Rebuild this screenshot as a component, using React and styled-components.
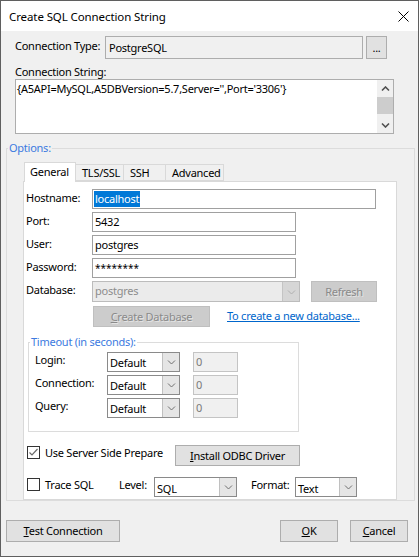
import React from 'react';
import styled, { createGlobalStyle } from 'styled-components';

const GlobalStyle = createGlobalStyle`
  html, body { margin: 0; padding: 0; background: #f0f0f0; }
  body {
    font-family: 'Noto Sans', 'Segoe UI', sans-serif;
    font-size: 11px;
    letter-spacing: -0.25px;
    color: #000;
  }
  * { box-sizing: border-box; }
`;

const Window = styled.div`
  width: 419px;
  height: 557px;
  border: 1px solid #5f5f5f;
  background: #f0f0f0;
  display: flex;
  flex-direction: column;
`;

const TitleBar = styled.div`
  height: 30px;
  flex: none;
  background: #fff;
  display: flex;
  align-items: center;
  justify-content: space-between;
  padding: 0 9px 0 8px;
  font-size: 11.5px;
  letter-spacing: -0.1px;
`;

const TopSection = styled.div`
  padding: 5px 0 0 14px;
`;

const TypeRow = styled.div`
  display: flex;
  height: 23px;
`;

const TopLabel = styled.div`
  width: 90px;
  padding-top: 2px;
  line-height: 15px;
`;

const ReadOnlyBox = styled.div`
  width: 258px;
  height: 23px;
  border: 1px solid #adadad;
  background: #f0f0f0;
  padding: 0 3px;
  line-height: 21px;
`;

const Button = styled.div`
  width: ${p => p.$w}px;
  height: ${p => p.$h || 21}px;
  margin-left: ${p => p.$ml || 0}px;
  border: 1px solid ${p => (p.$disabled ? '#bfbfbf' : '#adadad')};
  background: ${p => (p.$disabled ? '#cccccc' : '#e1e1e1')};
  color: ${p => (p.$disabled ? '#8a8a8a' : '#000')};
  text-shadow: ${p => (p.$disabled ? '1px 1px 0 #e4e4e4' : 'none')};
  display: flex;
  align-items: center;
  justify-content: center;
  padding-bottom: 1px;
  flex: none;
  u { text-decoration: underline; }
`;

const StringLabel = styled.div`
  margin-top: 5px;
  line-height: 15px;
`;

const StringBox = styled.div`
  width: 379px;
  height: 55px;
  border: 1px solid #adadad;
  background: #fff;
  display: flex;
`;

const StringText = styled.div`
  flex: 1;
  padding: 1px 1px;
  line-height: 15px;
`;

const ScrollBar = styled.div`
  width: 16px;
  background: #f0f0f0;
  display: flex;
  flex-direction: column;
`;

const ScrollArrow = styled.div`
  height: 17px;
  display: flex;
  align-items: center;
  justify-content: center;
`;

const ScrollThumb = styled.div`
  height: 17px;
  background: #cdcdcd;
`;

const ScrollTrack = styled.div`
  flex: 1;
`;

const Group = styled.fieldset`
  margin: ${p => p.$m};
  width: ${p => p.$w}px;
  border: 1px solid #dcdcdc;
  padding: ${p => p.$p};
  min-width: 0;
`;

const Legend = styled.legend`
  color: #3c7ae0;
  line-height: 14px;
  padding: 0 1px;
  margin-left: ${p => p.$ml}px;
`;

const TabStrip = styled.div`
  margin-top: 7px;
  height: 19px;
  display: flex;
  align-items: flex-end;
  padding-left: 1px;
`;

const Tab = styled.div`
  width: ${p => p.$w}px;
  height: ${p => (p.$active ? 20 : 17)}px;
  margin-bottom: ${p => (p.$active ? -1 : 0)}px;
  margin-left: -1px;
  border: 1px solid #d9d9d9;
  border-bottom: ${p => (p.$active ? 'none' : '1px solid #d9d9d9')};
  background: ${p => (p.$active ? '#fff' : '#f0f0f0')};
  position: relative;
  z-index: ${p => (p.$active ? 1 : 0)};
  padding: ${p => (p.$active ? '2px 0 0 5px' : '1px 0 0 6px')};
  line-height: 14px;
  &:first-child { margin-left: 0; }
`;

const Panel = styled.div`
  width: 374px;
  border: 1px solid #d9d9d9;
  background: #fff;
  padding: 7px 0 2px 2px;
`;

const FormRow = styled.div`
  display: flex;
  height: ${p => p.$h || 20}px;
  margin-top: ${p => p.$mt ?? 3}px;
`;

const RowLabel = styled.div`
  width: ${p => p.$w}px;
  flex: none;
  line-height: 15px;
  padding-top: ${p => p.$pt ?? 1}px;
`;

const TextInput = styled.div`
  width: ${p => p.$w}px;
  height: 20px;
  border: 1px solid ${p => (p.$disabled ? '#c4c4c4' : '#a0a0a0')};
  background: ${p => (p.$disabled ? '#f0f0f0' : '#fff')};
  color: ${p => (p.$disabled ? '#7a7a7a' : '#000')};
  margin-left: ${p => p.$ml || 0}px;
  padding: 0 2px;
  line-height: 18px;
  flex: none;
`;

const Selected = styled.span`
  background: #0078d7;
  color: #fff;
  display: inline-block;
  line-height: 16px;
  padding-right: 1px;
  margin-left: -1px;
  padding-left: 1px;
`;

const Stars = styled.span`
  font-size: 10px;
  letter-spacing: 0;
`;

const Combo = styled.div`
  width: ${p => p.$w}px;
  height: ${p => p.$h || 20}px;
  border: 1px solid ${p => (p.$disabled ? '#bcbcbc' : '#8a8a8a')};
  background: ${p => (p.$disabled ? '#ebebeb' : '#fff')};
  color: ${p => (p.$disabled ? '#8d8d8d' : '#000')};
  display: flex;
  flex: none;
`;

const ComboText = styled.div`
  flex: 1;
  padding: ${p => p.$pt || 0}px 2px 0;
  line-height: 18px;
`;

const ComboArrow = styled.div`
  width: 17px;
  background: ${p => (p.$disabled ? '#d6d6d6' : '#e5e5e5')};
  border-left: 1px solid ${p => (p.$disabled ? '#c4c4c4' : '#c0c0c0')};
  display: flex;
  align-items: center;
  justify-content: center;
`;

const LinkText = styled.span`
  margin-left: 17px;
  color: #0066cc;
  text-decoration: underline;
  line-height: 15px;
  padding-top: 2px;
`;

const CheckRow = styled.div`
  display: flex;
  align-items: flex-start;
  margin-top: ${p => p.$mt}px;
  padding-left: 1px;
`;

const CheckItem = styled.div`
  width: ${p => p.$w}px;
  flex: none;
  display: flex;
  align-items: flex-start;
`;

const CheckBox = styled.span`
  width: 13px;
  height: 13px;
  margin-top: 1px;
  border: 1px solid #333;
  background: #fff;
  display: flex;
  align-items: center;
  justify-content: center;
  flex: none;
`;

const CheckLabel = styled.span`
  margin-left: 5px;
  line-height: 15px;
`;

const InlineLabel = styled.span`
  width: ${p => p.$w}px;
  margin-left: ${p => p.$ml || 0}px;
  flex: none;
  line-height: 15px;
`;

const BottomBar = styled.div`
  display: flex;
  margin-top: 19px;
  padding: 0 10px 0 5px;
`;

const Spacer = styled.div`
  flex: 1;
`;

const Chevron = ({ up, color = '#606060', w = 7, sw = 1 }) => (
  <svg width={w + 2} height={6} viewBox={`0 0 ${w + 2} 6`}>
    <polyline
      points={up ? `1,4.5 ${w / 2 + 1},1 ${w + 1},4.5` : `1,1.5 ${w / 2 + 1},5 ${w + 1},1.5`}
      fill="none"
      stroke={color}
      strokeWidth={sw}
    />
  </svg>
);

const ComboBox = ({ w, h, value, disabled, pt }) => (
  <Combo $w={w} $h={h} $disabled={disabled}>
    <ComboText $pt={pt}>{value}</ComboText>
    <ComboArrow $disabled={disabled}>
      <Chevron color={disabled ? '#b0b0b0' : '#707070'} />
    </ComboArrow>
  </Combo>
);

const Check = ({ checked }) => (
  <CheckBox>
    {checked && (
      <svg width="11" height="11" viewBox="0 0 11 11">
        <polyline points="1.5,5.5 4,8 9.5,2" fill="none" stroke="#6a6a6a" strokeWidth="1.2" />
      </svg>
    )}
  </CheckBox>
);

const timeoutRows = ['Login:', 'Connection:', 'Query:'];

export default function App() {
  return (
    <>
      <GlobalStyle />
      <Window>
        <TitleBar>
          <span>Create SQL Connection String</span>
          <svg width="11" height="11" viewBox="0 0 11 11">
            <path d="M0.5 0.5 L10.5 10.5 M10.5 0.5 L0.5 10.5" stroke="#000" strokeWidth="1" />
          </svg>
        </TitleBar>

        <TopSection>
          <TypeRow>
            <TopLabel>Connection Type:</TopLabel>
            <ReadOnlyBox>PostgreSQL</ReadOnlyBox>
            <Button $w={21} $h={23} $ml={3}>...</Button>
          </TypeRow>
          <StringLabel>Connection String:</StringLabel>
          <StringBox>
            <StringText>{"{A5API=MySQL,A5DBVersion=5.7,Server='',Port='3306'}"}</StringText>
            <ScrollBar>
              <ScrollArrow>
                <Chevron up color="#505050" sw={1.6} />
              </ScrollArrow>
              <ScrollThumb />
              <ScrollTrack />
              <ScrollArrow>
                <Chevron color="#505050" sw={1.6} />
              </ScrollArrow>
            </ScrollBar>
          </StringBox>
        </TopSection>

        <Group $m="7px 0 0 5px" $w={409} $p="0 0 0 16px">
          <Legend $ml={-15}>Options:</Legend>
          <TabStrip>
            <Tab $active $w={52}>General</Tab>
            <Tab $w={49}>TLS/SSL</Tab>
            <Tab $w={43}>SSH</Tab>
            <Tab $w={59}>Advanced</Tab>
          </TabStrip>
          <Panel>
            <FormRow $mt={0}>
              <RowLabel $w={66}>Hostname:</RowLabel>
              <TextInput $w={284}>
                <Selected>localhost</Selected>
              </TextInput>
            </FormRow>
            <FormRow>
              <RowLabel $w={66}>Port:</RowLabel>
              <TextInput $w={204}>5432</TextInput>
            </FormRow>
            <FormRow>
              <RowLabel $w={66}>User:</RowLabel>
              <TextInput $w={204}>postgres</TextInput>
            </FormRow>
            <FormRow>
              <RowLabel $w={66}>Password:</RowLabel>
              <TextInput $w={204}>
                <Stars>********</Stars>
              </TextInput>
            </FormRow>
            <FormRow $h={21}>
              <RowLabel $w={66}>Database:</RowLabel>
              <ComboBox w={208} h={21} value="postgres" disabled />
              <Button $w={66} $ml={11} $disabled>Refresh</Button>
            </FormRow>
            <FormRow $h={21} $mt={4}>
              <RowLabel $w={67} />
              <Button $w={117} $disabled>
                <span><u>C</u>reate Database</span>
              </Button>
              <LinkText>To create a new database...</LinkText>
            </FormRow>

            <Group $m="8px 0 0 2px" $w={271} $p="0 0 13px 6px">
              <Legend $ml={-5}>Timeout (in seconds):</Legend>
              {timeoutRows.map(label => (
                <FormRow key={label}>
                  <RowLabel $w={72} $pt={0}>{label}</RowLabel>
                  <ComboBox w={73} value="Default" pt={1} />
                  <TextInput $w={45} $ml={13} $disabled>0</TextInput>
                </FormRow>
              ))}
            </Group>

            <CheckRow $mt={13}>
              <CheckItem $w={148}>
                <Check checked />
                <CheckLabel>Use Server Side Prepare</CheckLabel>
              </CheckItem>
              <Button $w={125}>
                <span><u>I</u>nstall ODBC Driver</span>
              </Button>
            </CheckRow>
            <CheckRow $mt={11}>
              <CheckItem $w={92}>
                <Check />
                <CheckLabel>Trace SQL</CheckLabel>
              </CheckItem>
              <InlineLabel $w={35}>Level:</InlineLabel>
              <ComboBox w={83} value="SQL" pt={2} />
              <InlineLabel $w={44} $ml={14}>Format:</InlineLabel>
              <ComboBox w={62} value="Text" pt={2} />
            </CheckRow>
          </Panel>
        </Group>

        <BottomBar>
          <Button $w={114} $h={22}>
            <span><u>T</u>est Connection</span>
          </Button>
          <Spacer />
          <Button $w={58} $h={22}>
            <span><u>O</u>K</span>
          </Button>
          <Button $w={58} $h={22} $ml={12}>
            <span><u>C</u>ancel</span>
          </Button>
        </BottomBar>
      </Window>
    </>
  );
}
